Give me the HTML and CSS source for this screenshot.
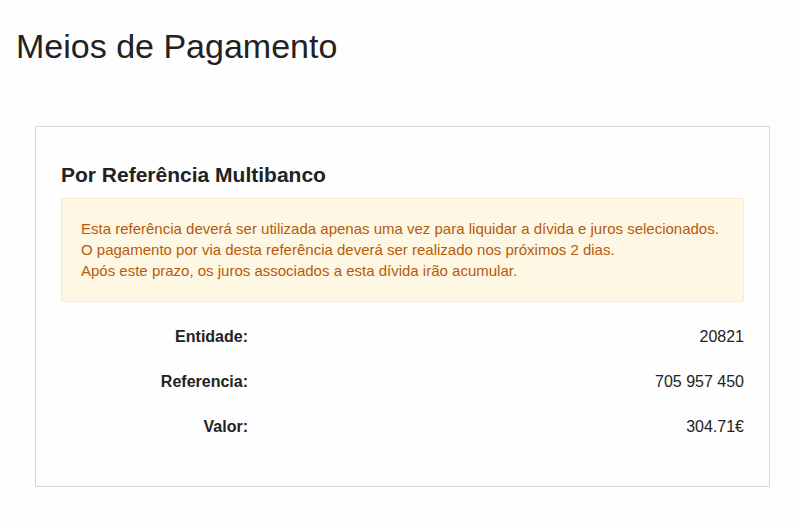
FILE: index.html
```html
<!DOCTYPE html>
<html lang="pt">
<head>
<meta charset="utf-8">
<meta name="viewport" content="width=device-width, initial-scale=1">
<title>Meios de Pagamento</title>
<link rel="stylesheet" href="styles.css">
</head>
<body>
<main class="page">
  <h1 class="page-title">Meios de Pagamento</h1>
  <section class="panel">
    <h2 class="panel-title">Por Referência Multibanco</h2>
    <div class="alert">
      <p>Esta referência deverá ser utilizada apenas uma vez para liquidar a dívida e juros selecionados.</p>
      <p>O pagamento por via desta referência deverá ser realizado nos próximos 2 dias.</p>
      <p>Após este prazo, os juros associados a esta dívida irão acumular.</p>
    </div>
    <dl class="details">
      <div class="row"><dt>Entidade:</dt><dd>20821</dd></div>
      <div class="row"><dt>Referencia:</dt><dd>705 957 450</dd></div>
      <div class="row"><dt>Valor:</dt><dd>304.71€</dd></div>
    </dl>
  </section>
</main>
</body>
</html>
```

FILE: styles.css
```css
* {
  box-sizing: border-box;
}

body {
  margin: 0;
  background: #fefefe;
  color: #222;
  font-family: "Liberation Sans", Arial, sans-serif;
  font-size: 16px;
  line-height: 22px;
}

h1, h2, p, dl, dd {
  margin: 0;
}

.page {
  padding: 26px 27px 42px 16px;
}

.page-title {
  font-size: 34px;
  font-weight: 400;
  line-height: 40px;
}

.panel {
  margin: 60px 0 0 19px;
  padding: 35px 25px 48px;
  border: 1px solid #d8d8d8;
}

.panel-title {
  font-size: 21px;
  font-weight: 700;
  line-height: 26px;
}

.alert {
  margin-top: 10px;
  padding: 19px 19px 20px;
  border: 1px solid #f8eac8;
  border-radius: 2px;
  background: #fef7e3;
  color: #b85a0c;
  font-size: 15px;
  line-height: 21px;
}

.details {
  display: grid;
  gap: 23px;
  margin-top: 24px;
}

.row {
  display: grid;
  grid-template-columns: 187px 1fr;
}

.row dt {
  font-weight: 700;
  text-align: right;
}

.row dd {
  text-align: right;
}
```
